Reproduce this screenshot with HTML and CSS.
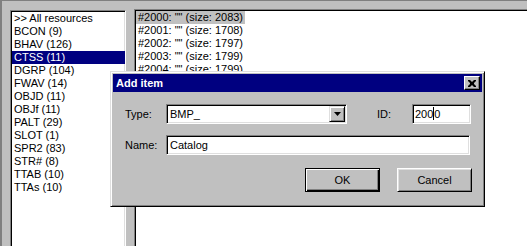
FILE: index.html
```html
<!DOCTYPE html>
<html lang="en">
<head>
    <meta charset="UTF-8">
    <title>Add item</title>
    <link rel="stylesheet" href="styles.css">
</head>
<body>
    <div class="app">
        <div class="panes">
            <ul class="list res-list">
                <li>&gt;&gt; All resources</li>
                <li>BCON (9)</li>
                <li>BHAV (126)</li>
                <li class="selected">CTSS (11)</li>
                <li>DGRP (104)</li>
                <li>FWAV (14)</li>
                <li>OBJD (11)</li>
                <li>OBJf (11)</li>
                <li>PALT (29)</li>
                <li>SLOT (1)</li>
                <li>SPR2 (83)</li>
                <li>STR# (8)</li>
                <li>TTAB (10)</li>
                <li>TTAs (10)</li>
            </ul>
            <ul class="list item-list">
                <li><span class="inactive">#2000: "" (size: 2083)</span></li>
                <li><span>#2001: "" (size: 1708)</span></li>
                <li><span>#2002: "" (size: 1797)</span></li>
                <li><span>#2003: "" (size: 1799)</span></li>
                <li><span>#2004: "" (size: 1799)</span></li>
                <li><span>#2005: "" (size: 1802)</span></li>
                <li><span>#2006: "" (size: 1788)</span></li>
            </ul>
        </div>

        <!-- Dialog box -->
        <div class="dialog">
            <div class="titlebar">
                <span class="title">Add item</span>
                <span class="close-btn">
                    <svg width="8" height="7" viewBox="0 0 8 7">
                        <path d="M0 0h2l2 2 2-2h2v1l-2 2v1l2 2v1h-2l-2-2-2 2h-2v-1l2-2v-1l-2-2z" fill="#000"/>
                    </svg>
                </span>
            </div>
            <div class="dlg-body">
                <div class="row">
                    <span class="label">Type:</span>
                    <div class="combo field">
                        <span class="combo-text">BMP_</span>
                        <span class="combo-btn">
                            <svg width="7" height="4" viewBox="0 0 7 4"><path d="M0 0h7l-3.5 4z" fill="#000"/></svg>
                        </span>
                    </div>
                    <span class="label id-label">ID:</span>
                    <div class="field id-field">200<span class="caret"></span>0</div>
                </div>
                <div class="row name-row">
                    <span class="label">Name:</span>
                    <div class="field name-field">Catalog</div>
                </div>
                <div class="buttons">
                    <button class="btn default">OK</button>
                    <button class="btn">Cancel</button>
                </div>
            </div>
        </div>
    </div>
</body>
</html>
```

FILE: styles.css
```css
body {
    margin: 0;
    padding: 0;
    font-family: "Liberation Sans", Arial, sans-serif;
    font-size: 11px;
    color: #000;
}

.app {
    position: relative;
    width: 527px;
    height: 246px;
    overflow: hidden;
    background-color: #c0c0c0;
    border-top: 1px solid #808080;
    box-sizing: border-box;
}

.panes {
    display: flex;
    height: 100%;
    padding: 8px 0 0 2px;
    box-sizing: border-box;
    border-left: 2px solid #808080;
}

.list {
    list-style: none;
    margin: 0;
    padding: 0;
    background-color: #fff;
    border-top: 1px solid #808080;
    border-left: 1px solid #808080;
    box-shadow: inset 1px 1px 0 #000;
}

.list li {
    height: 13px;
    line-height: 13px;
    white-space: nowrap;
}

.res-list {
    width: 113px;
    margin: 1px 0 0 6px;
    padding: 1px 0 0 1px;
    border-right: 1px solid #fff;
    box-shadow: inset 1px 1px 0 #000, inset -1px 0 0 #dfdfdf;
}

.res-list li {
    padding-left: 2px;
}

.res-list li.selected {
    background-color: #000080;
    color: #fff;
}

.item-list {
    flex: 1;
    margin-left: 8px;
    padding: 1px 0 0 1px;
}

.item-list li span {
    display: inline-block;
    padding: 0 2px;
}

.item-list li span.inactive {
    background-color: #c0c0c0;
}

/* Dialog */
.dialog {
    position: absolute;
    left: 110px;
    top: 70px;
    width: 375px;
    height: 136px;
    box-sizing: border-box;
    background-color: #c0c0c0;
    border-top: 1px solid #dfdfdf;
    border-left: 1px solid #dfdfdf;
    border-right: 1px solid #000;
    border-bottom: 1px solid #000;
    box-shadow: inset 1px 1px 0 #fff, inset -1px -1px 0 #808080;
    padding: 2px;
}

.titlebar {
    display: flex;
    align-items: center;
    justify-content: space-between;
    height: 18px;
    background-color: #000080;
    padding: 0 2px 0 3px;
}

.title {
    color: #fff;
    font-weight: bold;
}

.close-btn {
    display: flex;
    align-items: center;
    justify-content: center;
    width: 16px;
    height: 14px;
    box-sizing: border-box;
    background-color: #c0c0c0;
    border-top: 1px solid #fff;
    border-left: 1px solid #fff;
    border-right: 1px solid #000;
    border-bottom: 1px solid #000;
    box-shadow: inset -1px -1px 0 #808080;
}

.dlg-body {
    padding: 12px 10px 0 12px;
}

.row {
    display: flex;
    align-items: center;
    height: 20px;
}

.label {
    width: 41px;
}

.field {
    height: 20px;
    box-sizing: border-box;
    background-color: #fff;
    border-top: 1px solid #808080;
    border-left: 1px solid #808080;
    border-right: 1px solid #fff;
    border-bottom: 1px solid #fff;
    box-shadow: inset 1px 1px 0 #000, inset -1px -1px 0 #dfdfdf;
    padding: 0 3px;
    line-height: 18px;
    white-space: nowrap;
}

.combo {
    display: flex;
    justify-content: space-between;
    width: 181px;
    padding-right: 1px;
}

.combo-btn {
    display: flex;
    align-items: center;
    justify-content: center;
    width: 16px;
    height: 16px;
    margin-top: 1px;
    box-sizing: border-box;
    background-color: #c0c0c0;
    border-top: 1px solid #dfdfdf;
    border-left: 1px solid #dfdfdf;
    border-right: 1px solid #000;
    border-bottom: 1px solid #000;
    box-shadow: inset 1px 1px 0 #fff, inset -1px -1px 0 #808080;
}

.id-label {
    width: 35px;
    margin-left: 30px;
}

.id-field {
    width: 59px;
    padding-left: 2px;
}

.caret {
    display: inline-block;
    width: 1px;
    height: 13px;
    vertical-align: -2px;
    background-color: #000;
}

.name-row {
    margin-top: 11px;
}

.name-field {
    width: 304px;
}

.buttons {
    display: flex;
    justify-content: flex-end;
    gap: 17px;
    margin-top: 13px;
}

.btn {
    width: 75px;
    height: 24px;
    margin: 0;
    padding: 0;
    font-family: "Liberation Sans", Arial, sans-serif;
    font-size: 11px;
    color: #000;
    background-color: #c0c0c0;
    border-top: 1px solid #fff;
    border-left: 1px solid #fff;
    border-right: 1px solid #000;
    border-bottom: 1px solid #000;
    box-shadow: inset 1px 1px 0 #dfdfdf, inset -1px -1px 0 #808080;
}

.btn.default {
    border: 1px solid #000;
    box-shadow: inset 1px 1px 0 #fff, inset -1px -1px 0 #000, inset -2px -2px 0 #808080;
}
```
